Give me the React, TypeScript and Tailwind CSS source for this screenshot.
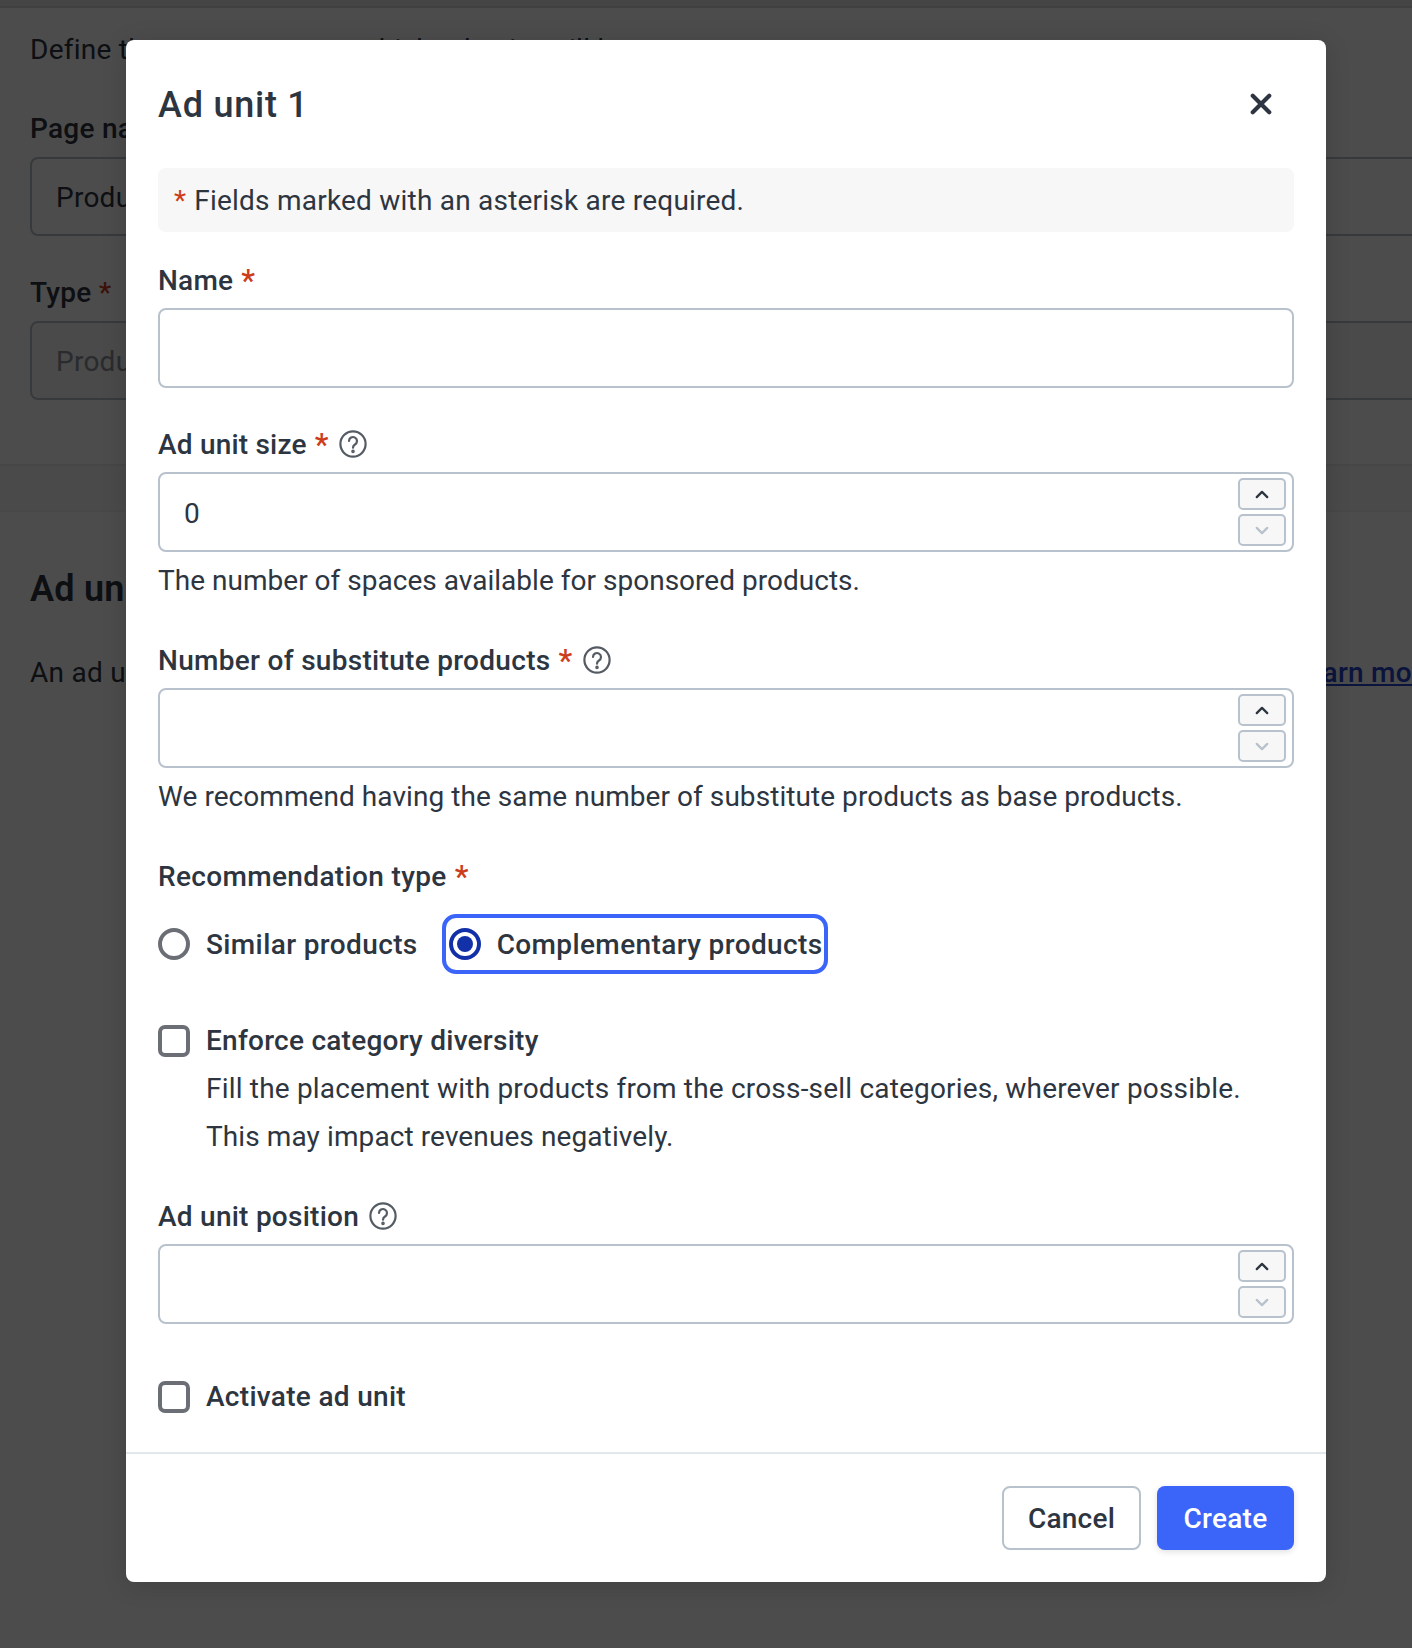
const ff = "[font-family:'Roboto','Liberation_Sans',sans-serif]";

function Star() {
  return <span className="ml-2 text-[#cc3d1b] text-[31px] leading-[28px]">*</span>;
}

function Help() {
  return (
    <svg viewBox="0 0 28 28" className="ml-[10px] mb-[2px] w-[28px] h-[28px] shrink-0" fill="none" stroke="#555b63" strokeWidth="2.2" strokeLinecap="round">
      <circle cx="14" cy="14" r="12.6" />
      <path d="M10 11a4 4 0 1 1 6 3.5c-1.3.8-2 1.5-2 3.2" />
      <circle cx="14" cy="21.4" r="0.7" fill="#555b63" />
    </svg>
  );
}

function Label({ text, star, help, mt, track = "tracking-[0.25px]" }: { text: string; star?: boolean; help?: boolean; mt: string; track?: string }) {
  return (
    <div className={`flex items-center h-[40px] font-medium text-[28px] text-[#2d3540] ${track} ${mt}`}>
      <span>{text}</span>
      {star && <Star />}
      {help && <Help />}
    </div>
  );
}

function Chevron({ up, color }: { up?: boolean; color: string }) {
  return (
    <svg viewBox="0 0 16 10" className="w-[14px] h-[9px]" fill="none" stroke={color} strokeWidth="2.6" strokeLinecap="round" strokeLinejoin="round">
      <path d={up ? "M2 8l6-6 6 6" : "M2 2l6 6 6-6"} />
    </svg>
  );
}

function NumberInput({ value, mt }: { value?: string; mt: string }) {
  return (
    <div className={`flex items-center justify-between h-[80px] rounded-[8px] border-2 border-[#b8c2cc] pl-[24px] pr-[6px] ${mt}`}>
      <span className="text-[28px] text-[#2d3540] pt-[3px]">{value}</span>
      <div className="flex flex-col gap-[4px]">
        <div className="flex items-center justify-center w-[48px] h-[32px] rounded-[5px] border-2 border-[#b8c2cc] bg-[#f7f7f7]">
          <Chevron up color="#2d3540" />
        </div>
        <div className="flex items-center justify-center w-[48px] h-[32px] rounded-[5px] border-2 border-[#b8c2cc] bg-[#f7f7f7]">
          <Chevron color="#b8c2cc" />
        </div>
      </div>
    </div>
  );
}

function HelpText({ children, mt, track }: { children: string; mt: string; track: string }) {
  return <div className={`h-[40px] leading-[40px] text-[28px] text-[#2d3540] ${track} ${mt}`}>{children}</div>;
}

function Checkbox() {
  return <span className="block w-[32px] h-[32px] shrink-0 rounded-[7px] border-[4px] border-[#6b6f75] bg-white" />;
}

function Background() {
  return (
    <div className="w-[1437px] text-[28px] text-[#2d3540] tracking-[0.25px]">
      <div className="h-[8px] bg-[#e6e6e6] border-b-2 border-[#d5d5d5]" />
      <div className="pl-[30px] pt-[22px] h-[458px] border-b-2 border-[#ececec]">
        <div className="h-[40px] leading-[40px]">Define the parameters on which ad units will be sent.</div>
        <div className="mt-[39px] h-[40px] leading-[40px] font-medium">Page name</div>
        <div className="mt-[8px] h-[79px] flex items-center pl-[24px] pt-[2px] rounded-[8px] border-2 border-[#b8c2cc]">Product page</div>
        <div className="mt-[37px] h-[40px] leading-[40px] font-medium">
          Type <span className="text-[#cc3d1b]">*</span>
        </div>
        <div className="mt-[8px] h-[79px] flex items-center pl-[24px] pt-[2px] rounded-[8px] border-2 border-[#b8c2cc] bg-[#f7f7f7] text-[#8a929b]">Product page</div>
      </div>
      <div className="h-[46px] bg-[#f7f7f7] border-b-2 border-[#f0f0f0]" />
      <div className="pl-[30px]">
        <div className="mt-[53px] h-[48px] leading-[48px] text-[36px] font-semibold">Ad units</div>
        <div className="mt-[40px] h-[40px] leading-[40px] flex justify-between">
          <span>An ad unit is a space on your page.</span>
          <span className="font-medium text-[#2743c9] underline">Learn more</span>
        </div>
      </div>
    </div>
  );
}

export default function App() {
  return (
    <div className={`relative w-[1412px] h-[1648px] overflow-hidden bg-white ${ff}`}>
      <Background />
      <div className="absolute inset-0 bg-black/70 pl-[126px] pt-[40px]">
        <div className="w-[1200px] h-[1542px] bg-white rounded-[8px] shadow-[0_4px_24px_rgba(0,0,0,0.15)] text-[#2d3540]">
          <div className="px-[32px]">
            <div className="flex items-center justify-between h-[128px]">
              <h2 className="text-[36px] font-medium tracking-[0.76px] pt-[2px]">Ad unit 1</h2>
              <svg viewBox="0 0 20 20" className="w-[22px] h-[22px] mr-[22px]" fill="none" stroke="#2d3540" strokeWidth="3.8" strokeLinecap="round">
                <path d="M2.5 2.5l15 15M17.5 2.5l-15 15" />
              </svg>
            </div>
            <div className="flex items-center h-[64px] rounded-[8px] bg-[#f7f7f7] pl-[16px] pt-[2px] text-[28px] tracking-[0.22px]">
              <span className="text-[#cc3d1b] mr-[8px]">*</span>
              Fields marked with an asterisk are required.
            </div>

            <Label text="Name" star mt="mt-[29px]" />
            <div className="mt-[7px] h-[80px] rounded-[8px] border-2 border-[#b8c2cc]" />

            <Label text="Ad unit size" star help mt="mt-[37px]" track="tracking-[0.2px]" />
            <NumberInput value="0" mt="mt-[7px]" />
            <HelpText mt="mt-[9px]" track="tracking-[0.02px]">The number of spaces available for sponsored products.</HelpText>

            <Label text="Number of substitute products" star help mt="mt-[40px]" track="tracking-[0.3px]" />
            <NumberInput mt="mt-[7px]" />
            <HelpText mt="mt-[9px]" track="tracking-[0.06px]">We recommend having the same number of substitute products as base products.</HelpText>

            <Label text="Recommendation type" star mt="mt-[40px]" track="tracking-[0.35px]" />
            <div className="mt-[17px] flex items-center h-[60px] text-[28px] font-medium tracking-[0.38px]">
              <span className="block w-[32px] h-[32px] rounded-full border-[4px] border-[#6b6f75]" />
              <span className="ml-[16px] pt-[2px]">Similar products</span>
              <div className="ml-[24px] flex items-center h-[60px] w-[386px] rounded-[14px] border-[4px] border-[#3b64f8] pl-[3px]">
                <span className="flex items-center justify-center w-[32px] h-[32px] rounded-full border-[4px] border-[#1231a8]">
                  <span className="block w-[16px] h-[16px] rounded-full bg-[#1231a8]" />
                </span>
                <span className="ml-[16px] pt-[2px]">Complementary products</span>
              </div>
            </div>

            <div className="mt-[47px] flex items-center h-[40px] text-[28px] font-medium tracking-[0.25px]">
              <Checkbox />
              <span className="ml-[16px]">Enforce category diversity</span>
            </div>
            <div className="pl-[48px] mt-[4px] text-[28px] leading-[48px]">
              <div className="tracking-[0.19px]">Fill the placement with products from the cross-sell categories, wherever possible.</div>
              <div className="tracking-[0.1px]">This may impact revenues negatively.</div>
            </div>

            <Label text="Ad unit position" help mt="mt-[36px]" />
            <NumberInput mt="mt-[7px]" />

            <div className="mt-[53px] flex items-center h-[40px] text-[28px] font-medium tracking-[0.3px]">
              <Checkbox />
              <span className="ml-[16px]">Activate ad unit</span>
            </div>
          </div>
          <div className="mt-[35px] h-[2px] bg-[#e2e7eb]" />
          <div className="flex justify-end gap-[16px] px-[32px] pt-[32px] text-[28px] tracking-[0.25px]">
            <button className="w-[139px] h-[64px] pt-[2px] rounded-[8px] border-2 border-[#b8c2cc] bg-white font-medium text-[#2d3540]">Cancel</button>
            <button className="w-[137px] h-[64px] pt-[2px] rounded-[8px] bg-[#3b64f8] font-medium text-white shadow-[0_2px_6px_rgba(0,0,0,0.12)]">Create</button>
          </div>
        </div>
      </div>
    </div>
  );
}
